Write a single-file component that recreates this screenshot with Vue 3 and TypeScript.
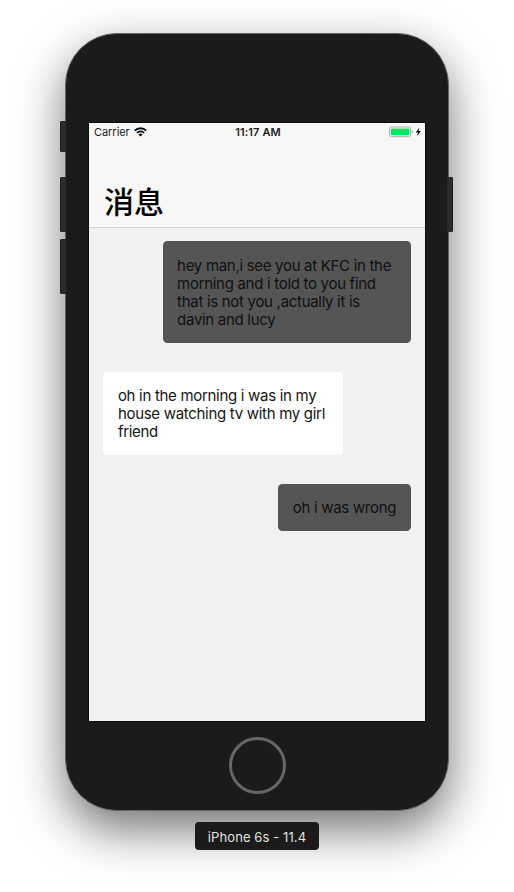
<script setup lang="ts">
interface Message {
  id: number
  mine: boolean
  lines: string[]
}

const messages: Message[] = [
  {
    id: 1,
    mine: true,
    lines: [
      'hey man,i see you at KFC in the',
      'morning and i told to you find',
      'that is not you ,actually it is',
      'davin and lucy',
    ],
  },
  {
    id: 2,
    mine: false,
    lines: ['oh in the morning i was in my', 'house watching tv with my girl', 'friend'],
  },
  { id: 3, mine: true, lines: ['oh i was wrong'] },
]
</script>

<template>
  <main class="desktop">
    <div class="phone">
      <i class="key mute"></i>
      <i class="key volume-up"></i>
      <i class="key volume-down"></i>
      <i class="key power"></i>
      <section class="screen">
        <header class="navbar">
          <div class="status">
            <div class="carrier">
              <span>Carrier</span>
              <svg class="wifi" width="13" height="10" viewBox="0 0 13 10" fill="none" stroke="#050505">
                <path d="M.8 3.6A8.1 8.1 0 0 1 12.2 3.6" stroke-width="1.9" />
                <path d="M2.9 5.9A5.1 5.1 0 0 1 10.1 5.9" stroke-width="1.7" />
                <path d="M6.5 9.6 4.4 7.5A3 3 0 0 1 8.6 7.5Z" fill="#050505" stroke="none" />
              </svg>
            </div>
            <span class="time">11:17 AM</span>
            <div class="power-state">
              <svg width="33" height="12" viewBox="0 0 33 12">
                <rect x=".6" y="1" width="21" height="9.7" rx="2" fill="#fff" stroke="#aaa" />
                <rect x="2" y="2.4" width="18.4" height="6.9" rx=".7" fill="#00e564" />
                <path d="M22.8 4.1Q24.1 4.7 24.1 5.8T22.8 7.5Z" fill="#aaa" />
                <path d="M30.4 1.5 26.8 6.4H29L28 10.2 31.8 5.1H29.5Z" fill="#080808" />
              </svg>
            </div>
          </div>
          <h1>消息</h1>
        </header>
        <div class="messages">
          <div v-for="message in messages" :key="message.id" class="bubble" :class="{ mine: message.mine }">
            <p v-for="line in message.lines" :key="line">{{ line }}</p>
          </div>
        </div>
      </section>
      <div class="home"></div>
    </div>
    <div class="device-name">iPhone 6s - 11.4</div>
  </main>
</template>

<style>
body {
  margin: 0;
  background: #fff;
}
</style>

<style scoped>
* {
  box-sizing: border-box;
}
.desktop {
  width: 514px;
  height: 892px;
  padding-top: 33px;
  display: flex;
  flex-direction: column;
  align-items: center;
  overflow: hidden;
  background: #fff;
  font-family: Inter, "Noto Sans CJK SC", sans-serif;
}
.phone {
  position: relative;
  width: 384px;
  height: 778px;
  flex: none;
  padding-top: 89px;
  border: 1px solid #666;
  border-radius: 52px;
  background: #1b1b1b;
  display: flex;
  flex-direction: column;
  align-items: center;
  box-shadow: 0 19px 48px rgba(0, 0, 0, 0.55);
}
.key {
  position: absolute;
  left: -6px;
  width: 6px;
  border-radius: 2px 0 0 2px;
  background: #2b2b2b;
  box-shadow: inset 1px 0 #1d1d1d;
}
.mute {
  top: 87px;
  height: 31px;
}
.volume-up {
  top: 143px;
  height: 55px;
}
.volume-down {
  top: 205px;
  height: 55px;
}
.power {
  left: auto;
  right: -5px;
  top: 143px;
  height: 55px;
  border-radius: 0 2px 2px 0;
  box-shadow: inset -1px 0 #1d1d1d;
}
.screen {
  width: 336px;
  height: 598px;
  flex: none;
  background: #f1f1f1;
  box-shadow: 0 0 0 1px #0c0c0c;
}
.navbar {
  height: 105px;
  background: #f7f7f7;
  border-bottom: 1px solid #d2d2d2;
}
.status {
  height: 18px;
  display: grid;
  grid-template-columns: 1fr auto 1fr;
  align-items: center;
  padding: 0 3px 0 5px;
  font-size: 11px;
  line-height: 18px;
  color: #222;
}
.carrier {
  display: flex;
  align-items: center;
  gap: 4.5px;
  letter-spacing: -0.05px;
}
.time {
  font-weight: 600;
  letter-spacing: 0.1px;
}
.power-state {
  display: flex;
  justify-content: flex-end;
}
h1 {
  margin: 37px 0 0 15px;
  font: 500 30px/44px "Noto Sans CJK SC", sans-serif;
  color: #000;
}
.messages {
  display: flex;
  flex-direction: column;
  align-items: flex-start;
  gap: 28.6px;
  padding: 13.3px 14.4px;
}
.bubble {
  padding: 15.3px 14.5px 13.7px;
  border-radius: 4.5px;
  background: #fff;
  font-size: 15px;
  line-height: 18.2px;
  letter-spacing: -0.3px;
  color: #151515;
}
.bubble:not(.mine) {
  width: 240px;
}
.mine {
  align-self: flex-end;
  background: #555;
  color: #101010;
}
.mine:first-child {
  width: 248px;
}
.bubble p {
  margin: 0;
  white-space: nowrap;
}
.home {
  width: 57px;
  height: 57px;
  flex: none;
  margin-top: 15.5px;
  border: 3px solid #666;
  border-radius: 50%;
}
.device-name {
  position: relative;
  width: 124px;
  height: 28px;
  flex: none;
  margin-top: 11px;
  border-radius: 4px;
  background: #1b1b1b;
  color: #e0e0e0;
  font-size: 13px;
  line-height: 30px;
  letter-spacing: 0.1px;
  text-align: center;
  white-space: nowrap;
}
</style>
